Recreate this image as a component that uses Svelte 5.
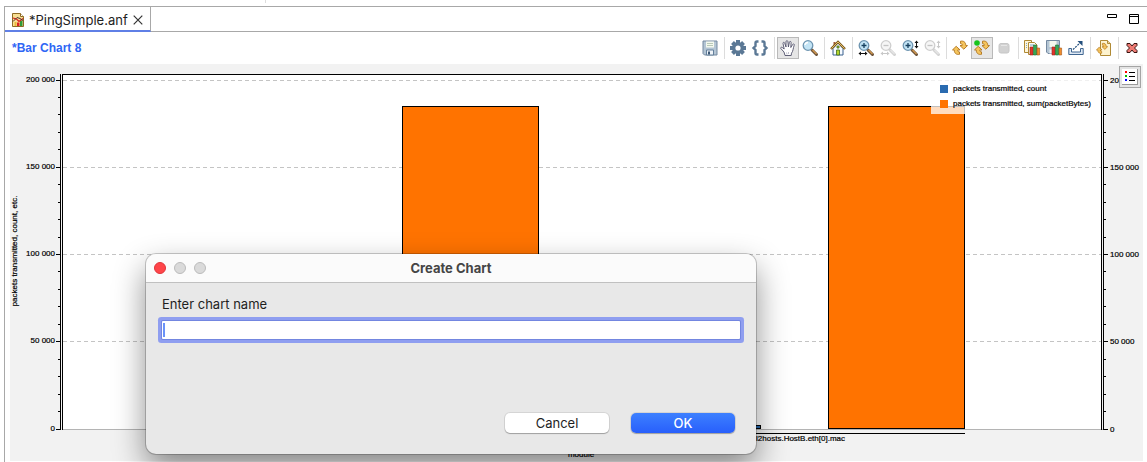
<script>
  let W = $state(1133);
  let H = $state(397);
  let name = $state('');

  const max = 200000;
  const plotLeft = 52;
  const plotTop = 10;
  let plotRight = $derived(W - 42);
  let plotBottom = $derived(H - 32);
  let plotWidth = $derived(plotRight - plotLeft);

  const y = (v) => Math.floor(plotBottom - (v / max) * (plotBottom - 16));
  const x = (f) => Math.round(plotLeft + (f / 1039) * plotWidth);

  const majors = [0, 50000, 100000, 150000, 200000];
  const minors = Array.from({ length: 20 }, (_, i) => i * 10000);
  const fmt = (v) => (v ? v / 1000 + ' 000' : '0');

  const barWidth = 137;
  const bars = [
    { at: 136, value: 2200, color: '#2a6bb0' },
    { at: 340, value: 185000, color: '#ff7300' },
    { at: 562, value: 2200, color: '#2a6bb0' },
    { at: 766, value: 185000, color: '#ff7300' }
  ];
  const groups = [
    { from: 136, to: 477 },
    { from: 562, to: 903 }
  ];

  const legend = [
    { label: 'packets transmitted, count', color: '#2a6bb0' },
    { label: 'packets transmitted, sum(packetBytes)', color: '#ff7300' }
  ];

  const tools = [
    ['save'],
    ['gear', 'braces'],
    ['hand', 'lens'],
    ['home'],
    ['hin', 'hout', 'vin', 'vout'],
    ['refresh', 'live', 'stop'],
    ['copy', 'image', 'export'],
    ['script'],
    ['close']
  ];
  const pressed = ['hand', 'live'];
  const titles = {
    save: 'Save', gear: 'Properties', braces: 'Script', hand: 'Pan', lens: 'Zoom', home: 'Home',
    hin: 'Zoom in horizontally', hout: 'Zoom out horizontally', vin: 'Zoom in vertically',
    vout: 'Zoom out vertically', refresh: 'Refresh', live: 'Live refresh', stop: 'Stop',
    copy: 'Copy chart', image: 'Save image', export: 'Export', script: 'Reload', close: 'Close'
  };
</script>

{#snippet magnifier(off, sign)}
  <path d="M10 10l4.500 4.500" stroke={off ? '#d2d2d2' : '#6b5138'} stroke-width="3" stroke-linecap="round" />
  <path d="M10.500 10l4 4" stroke={off ? '#e6e6e6' : '#d49a4e'} stroke-width="1.300" />
  <circle cx="6" cy="5.500" r="4.800" fill={off ? '#f6f6f6' : '#c3e4f5'} stroke={off ? '#cecece' : '#6d94b0'} stroke-width="1.300" />
  {#if !off && !sign}<path d="M3 5a3 3 0 0 1 3-2.500" stroke="#fff" stroke-width="1.400" />{/if}
  {#if sign}
    <path d={sign === '+' ? 'M3.500 5.500h5M6 3v5' : 'M3.500 5.500h5'} stroke={off ? '#c4c4c4' : '#17405f'} stroke-width="1.300" />
  {/if}
{/snippet}

{#snippet hArrows(c)}
  <path d="M1 13.500h8" stroke={c} />
  <path d="M3 11.500v4l-2.500-2zM7 11.500v4l2.500-2z" fill={c} />
{/snippet}

{#snippet vArrows(c)}
  <path d="M14.500 1v7" stroke={c} />
  <path d="M12.500 3h4L14.500.500zM12.500 6h4l-2 2.500z" fill={c} />
{/snippet}

{#snippet cycle()}
  <path id="" d="M8.500 1.200c3-.6 5.200.8 5.200 4.200l1.800.2-3.700 3.600L8 5.600l2.300-.2c0-1.200-.6-1.800-1.800-1.800z" fill="#f5c45c" stroke="#b0741c" stroke-width=".9" />
  <path d="M7.500 14.300c-3 .6-5.200-.8-5.200-4.200L.5 9.900l3.700-3.600L8 9.900l-2.300.2c0 1.200.6 1.800 1.800 1.800z" fill="#f5c45c" stroke="#b0741c" stroke-width=".9" />
{/snippet}

{#snippet miniBars()}
  <path d="M6 7h3v8H6z" fill="#e0342b" stroke="#9c2a1c" stroke-width=".6" />
  <path d="M9.500 5h3v10h-3z" fill="#35a853" stroke="#1d6b33" stroke-width=".6" />
  <path d="M13 8h2.600v7H13z" fill="#f08c2d" stroke="#a3561a" stroke-width=".6" />
{/snippet}

{#snippet icon(id)}
  <svg class="icon" viewBox="0 0 16 16" width="16" height="16" fill="none" aria-hidden="true">
    {#if id === 'save'}
      <path d="M1 1h14v14H2.500L1 13.500z" fill="#b4c5d4" stroke="#7489a0" />
      <path d="M4 1.500h8v6H4z" fill="#f4f8ee" />
      <path d="M5 3.500h6M5 5.500h6" stroke="#b8c9b8" />
      <path d="M4.500 10h7v5h-7z" fill="#eef3f8" stroke="#64809c" />
      <path d="M6 11.500h2v3H6z" fill="#3c5876" />
    {:else if id === 'gear'}
      <g stroke="#5b7895" stroke-width="4"><path d="M8 0v16M0 8h16M2.500 2.500l11 11M13.500 2.500l-11 11" /></g>
      <circle cx="8" cy="8" r="6" fill="#5b7895" />
      <circle cx="8" cy="8" r="2.600" fill="#fff" />
    {:else if id === 'braces'}
      <path d="M6.500 1.500H5Q3.500 1.500 3.500 3v3L1.500 8l2 2v3q0 1.500 1.500 1.500h1.500M9.500 1.500H11q1.500 0 1.500 1.500v3l2 2-2 2v3q0 1.500-1.500 1.500H9.500" stroke="#5b7895" stroke-width="2.400" />
    {:else if id === 'hand'}
      <path d="M5 15.500L4 12 .8 8.500c-.6-1 .7-1.700 1.500-1L4.200 9 3 3.500c-.2-1.400 1.300-1.600 1.700-.4L6 7 6 1.800C6 .3 7.700.3 7.900 1.600L8.400 7l1-4.800c.3-1.200 1.800-1 1.700.4L10.800 7.500l1.800-3c.6-1.100 2-.5 1.600.7-1.200 3.300-1 6-2.700 8l-.3 2.300z" fill="#fff" stroke="#50506a" stroke-width=".9" />
      <path d="M6.500 12.500l.5 2M8.500 12v2" stroke="#b4b4c4" stroke-width=".8" />
    {:else if id === 'lens'}
      {@render magnifier(false, '')}
    {:else if id === 'home'}
      <path d="M3 8.500L8 3l5 5.500V15H3z" fill="#f6faff" stroke="#39618e" />
      <path d="M3.500 2h2v4h-2z" fill="#a05a36" />
      <path d="M1 9l7-7 7 7" stroke="#7c5a1e" stroke-width="2.400" />
      <path d="M1.500 8.500L8 2l6.500 6.500" stroke="#e3bf68" stroke-width="1" />
      <path d="M7 6h2v2H7zM6.500 10h3v5h-3z" fill="#b4d62c" stroke="#406b1c" stroke-width=".8" />
    {:else if id === 'hin'}
      {@render magnifier(false, '+')}{@render hArrows('#111')}
    {:else if id === 'hout'}
      {@render magnifier(true, '-')}{@render hArrows('#c8c8c8')}
    {:else if id === 'vin'}
      {@render magnifier(false, '+')}{@render vArrows('#111')}
    {:else if id === 'vout'}
      {@render magnifier(true, '-')}{@render vArrows('#c8c8c8')}
    {:else if id === 'refresh'}
      {@render cycle()}
    {:else if id === 'live'}
      {@render cycle()}
      <circle cx="3" cy="3" r="2.800" fill="#18c41c" />
    {:else if id === 'stop'}
      <rect x="3" y="3.500" width="10" height="9.500" rx="2" fill="#d2d2d2" stroke="#c6c6c6" />
      <path d="M5 5.500h6" stroke="#e6e6e6" />
    {:else if id === 'copy'}
      <path d="M.5.500h7v12h-7z" fill="#fff6d8" stroke="#b08a35" />
      <path d="M4.500 2.500h6l2.500 2.500v9.500h-8.500z" fill="#fffdf2" stroke="#b08a35" />
      <path d="M2 3.500h1M2 5.500h1M2 7.500h1M6 5h4" stroke="#7da4c7" />
      {@render miniBars()}
    {:else if id === 'image'}
      <path d="M.5.500h13v13H2L.5 12z" fill="#b4c5d4" stroke="#7489a0" />
      <path d="M3.500 1h7v6h-7z" fill="#f4f8ee" />
      <path d="M3.500 9.500h4v4h-4z" fill="#eef3f8" />
      {@render miniBars()}
    {:else if id === 'export'}
      <path d="M.8 8.500v6h14.400v-6h-2.700V12h-9V8.500z" fill="#dfe9f4" stroke="#3f6590" />
      <path d="M5 9.500l7-6.500" stroke="#234f7d" stroke-width="1.200" stroke-dasharray="2 1" />
      <path d="M9.500 1h5v5z" fill="#234f7d" />
    {:else if id === 'script'}
      <path d="M4.500.500h7l3 3v12h-10z" fill="#fdf3cf" stroke="#b08a35" />
      <path d="M11.500.500v3h3" fill="#e8d49a" stroke="#b08a35" />
      <g transform="translate(0 2.500) scale(.75)">{@render cycle()}</g>
    {:else if id === 'close'}
      <path d="M3 3.500h3l2 2.500 2-2.500h3v2L10.500 8l2.500 2.500v2h-3L8 10l-2 2.500H3v-2L5.500 8 3 5.500z" fill="#ee7b74" stroke="#3b1411" />
    {/if}
  </svg>
{/snippet}

<div class="page">
  <div class="strip"></div>
  <section class="editor">
    <header class="tabs">
      <div class="tab">
        <svg width="12" height="14" viewBox="0 0 12 14" fill="none" aria-hidden="true">
          <path d="M.5.500h8l3 3v10H.5z" fill="#f7df94" stroke="#8f6b25" />
          <path d="M8.500.500v3h3" fill="#fff" stroke="#8f6b25" />
          <path d="M2.500 9h2v4h-2z" fill="#e8b83c" /><path d="M5 9.500h2.500V13H5z" fill="#d92020" /><path d="M8 7.500h2.500V13H8z" fill="#2f9b3b" />
          <path d="M1 5l3.500 1L7 8.500 11 5.500" stroke="#d92020" stroke-width="1.200" />
          <path d="M1 8.500L5 4.500 8 5.500l3 2" stroke="#503030" />
        </svg>
        <span>*PingSimple.anf</span>
        <button class="plain" aria-label="Close tab">
          <svg width="10" height="10" viewBox="0 0 10 10" aria-hidden="true"><path d="M.7.700l8.600 8.600M9.300.700L.7 9.300" stroke="#333" stroke-width="1.200" /></svg>
        </button>
      </div>
      <div class="window-tools">
        <button class="plain" aria-label="Minimize">
          <svg width="10" height="10" viewBox="0 0 10 10" fill="none" aria-hidden="true"><path d="M.5.500h9v3h-9z" stroke="#000" /></svg>
        </button>
        <button class="plain" aria-label="Maximize">
          <svg width="10" height="10" viewBox="0 0 10 10" fill="none" aria-hidden="true"><path d="M.5.500h9v9h-9zM.5 2.500h9" stroke="#000" /></svg>
        </button>
      </div>
    </header>

    <div class="bar">
      <h1>*Bar Chart 8</h1>
      <div class="toolbar" role="toolbar">
        {#each tools as group}
          <div class="group">
            {#each group as id}
              <button class="tool" class:pressed={pressed.includes(id)} aria-label={titles[id]}>{@render icon(id)}</button>
            {/each}
          </div>
        {/each}
      </div>
    </div>

    <div class="chart" bind:clientWidth={W} bind:clientHeight={H}>
      <svg class="plot" role="img" aria-label="Bar chart">
        <g shape-rendering="crispEdges">
          <rect x={plotLeft} y={plotTop} width={plotWidth} height={plotBottom - plotTop} fill="#fff" />
          {#each majors.slice(1) as v}
            <line x1={plotLeft + 1} x2={plotRight} y1={y(v) + 0.5} y2={y(v) + 0.5} stroke="#c4c4c4" stroke-dasharray="4 3" />
          {/each}
          <rect x={plotLeft} y={plotBottom} width={plotWidth + 2} height="1" fill="#b4b4b4" />
          {#each bars as b}
            <rect x={x(b.at) + 0.5} y={y(b.value) + 0.5} width={x(b.at + barWidth) - x(b.at) - 1} height={plotBottom - y(b.value) - 1} fill={b.color} stroke="#000" />
          {/each}
          {#each groups as g}
            <rect x={x(g.from)} y={plotBottom + 4} width={x(g.to) - x(g.from)} height="1" />
          {/each}
          <rect x={plotLeft} y={plotTop} width={plotWidth} height="1" />
          <rect x={plotLeft} y={plotTop} width="1" height={plotBottom - plotTop + 1} />
          <rect x={plotRight} y={plotTop} width="1" height={plotBottom - plotTop + 1} />
          <rect x={plotLeft - 2} y={plotTop} width="1" height={plotBottom - plotTop + 1} />
          <rect x={plotRight + 2} y={plotTop} width="1" height={plotBottom - plotTop + 1} />
          {#each minors as v}
            <rect x={plotLeft - 4} y={y(v)} width="2" height="1" />
            <rect x={plotRight + 3} y={y(v)} width="2" height="1" />
          {/each}
          {#each majors as v}
            <rect x={plotLeft - 6} y={y(v)} width="4" height="1" />
            <rect x={plotRight + 3} y={y(v)} width="4" height="1" />
          {/each}
          <rect x={plotRight - 170} y="14" width="168" height="36" fill="#fff" fill-opacity=".75" />
          {#each legend as item, i}
            <rect x={plotRight - 161} y={21 + i * 15} width="8" height="8" fill={item.color} />
          {/each}
        </g>
        {#each legend as item, i}
          <text x={plotRight - 148} y={27 + i * 15}>{item.label}</text>
        {/each}
        {#each majors as v}
          <text x={plotLeft - 7} y={y(v) + 2} text-anchor="end">{fmt(v)}</text>
          <text x={plotRight + 9} y={y(v) + 3}>{fmt(v)}</text>
        {/each}
        <text x={x(783)} y={plotBottom + 12} text-anchor="end">l2hosts.HostB.eth[0].mac</text>
        <text x={x(519)} y={plotBottom + 28} text-anchor="middle">module</text>
        <text transform="translate(7 187) rotate(-90)" text-anchor="middle">packets transmitted, count, etc.</text>
      </svg>
      <button class="legend-toggle" aria-label="Toggle legend">
        <svg width="16" height="16" viewBox="0 0 16 16" aria-hidden="true" shape-rendering="crispEdges">
          <path d="M0 0h15v15H0z" fill="#fff" /><path d="M15 0h1v16H0v-1h15z" fill="#9a9a9a" />
          <path d="M3 2h2v2H3z" fill="#f00" /><path d="M3 6h2v2H3z" fill="#00c000" /><path d="M3 10h2v2H3z" fill="#00f" />
          <path d="M7 3h6v1H7zM7 7h6v1H7zM7 11h6v1H7z" fill="#000" />
        </svg>
      </button>
    </div>
  </section>

  <form class="dialog" role="dialog" aria-labelledby="dialog-title" onsubmit={(e) => e.preventDefault()}>
    <div class="titlebar">
      <button type="button" class="light red" aria-label="Close"></button>
      <button type="button" class="light" aria-label="Minimize" disabled></button>
      <button type="button" class="light" aria-label="Zoom" disabled></button>
      <h2 id="dialog-title">Create Chart</h2>
    </div>
    <div class="body">
      <label for="chart-name">Enter chart name</label>
      <input id="chart-name" type="text" bind:value={name} />
      <div class="actions">
        <button type="button" class="push">Cancel</button>
        <button type="submit" class="push primary">OK</button>
      </div>
    </div>
  </form>
</div>

<style>
  :global(body) { margin: 0; background: #fff; }
  .page {
    position: relative;
    display: flex;
    flex-direction: column;
    height: 100vh;
    overflow: hidden;
    font: 13px/16px Inter, sans-serif;
    color: #1e1e1e;
  }
  button { font: inherit; color: inherit; margin: 0; padding: 0; border: 0; background: none; }
  svg { display: block; overflow: visible; }
  .strip {
    flex: none;
    height: 6px;
    background: linear-gradient(#ddd, #ddd) 265px 0 / 1px 3px no-repeat;
  }
  .editor {
    flex: 1;
    min-height: 0;
    display: flex;
    flex-direction: column;
    margin-left: 4px;
    border-left: 1px solid #a8a8a8;
    border-top: 1px solid #a8a8a8;
  }
  .tabs {
    display: flex;
    justify-content: space-between;
    height: 25px;
    background: linear-gradient(#a8a8a8, #a8a8a8) 0 100% / 100% 1px no-repeat;
  }
  .tab {
    display: flex;
    align-items: center;
    box-sizing: border-box;
    gap: 5px;
    padding: 2px 7px 0 7px;
    border-right: 1px solid #a8a8a8;
    border-bottom: 2px solid #5f7fe6;
    background: #fff;
  }
  .tab span { white-space: nowrap; }
  .window-tools { display: flex; gap: 12px; padding: 7px 8px 0 0; align-items: flex-start; }
  .bar {
    display: flex;
    align-items: center;
    justify-content: space-between;
    height: 32px;
    padding: 0 4px 0 7px;
  }
  h1 {
    margin: 0;
    font: bold 12px/16px "Liberation Sans", Arial, sans-serif;
    color: #2f66f5;
    white-space: nowrap;
  }
  .toolbar, .group { display: flex; }
  .group + .group { padding-left: 6px; background: linear-gradient(#dcdcdc, #dcdcdc) 3px 0 / 1px 100% no-repeat; }
  .tool { box-sizing: border-box; width: 22px; height: 22px; padding: 2px; border: 1px solid transparent; }
  .pressed { border-color: #b9b9b9; background: #e6e6e6; }
  .icon { width: 16px; height: 16px; }
  .chart {
    position: relative;
    flex: 1;
    min-height: 0;
    margin: 0 4px 1px 5px;
    background: #f2f2f2;
  }
  .plot { position: absolute; inset: 0; width: 100%; height: 100%; overflow: hidden; }
  .plot text { font: 8px "Liberation Sans", Arial, sans-serif; fill: #000; stroke: #000; stroke-width: 0.2px; }
  .legend-toggle {
    position: absolute;
    top: 2px;
    right: 2px;
    padding: 2px;
    border: 1px solid #a5a5a5;
    background: #e4e4e4;
  }
  .dialog {
    position: absolute;
    top: 254px;
    left: 146px;
    right: 391px;
    border-radius: 10px;
    background: #e8e8e8;
    box-shadow: 0 0 0 1px rgba(0, 0, 0, 0.2), 0 14px 32px rgba(0, 0, 0, 0.45);
  }
  .titlebar {
    position: relative;
    display: flex;
    align-items: center;
    gap: 8px;
    height: 28px;
    padding: 0 8px;
    border-bottom: 1px solid #c0c0c0;
    border-radius: 10px 10px 0 0;
    background: #fbfbfb;
  }
  .light {
    box-sizing: border-box;
    width: 12px;
    height: 12px;
    border: 1px solid #bcbcbc;
    border-radius: 50%;
    background: #dadada;
  }
  .light.red { border-color: #e0343a; background: #ff4549; }
  h2 {
    flex: 1;
    margin: 0 60px 0 0;
    font: 700 13px/16px Inter, sans-serif;
    color: #454545;
    text-align: center;
  }
  .body { display: flex; flex-direction: column; padding: 13px 16px 21px; }
  input {
    box-sizing: border-box;
    height: 18px;
    margin: 9px 0 74px;
    padding: 0 4px;
    border: 0;
    border-radius: 1px;
    outline: 0;
    font: inherit;
    caret-color: transparent;
    background: linear-gradient(#6a92f8, #6a92f8) 1px 2px / 2px 14px no-repeat #fff;
    box-shadow: 0 0 0 1px #7386e0, 0 0 0 4px #8f9ef0;
  }
  .actions { display: flex; justify-content: flex-end; gap: 22px; padding-right: 5px; }
  .push {
    width: 104px;
    height: 20px;
    border-radius: 5px;
    background: #fff;
    box-shadow: 0 0 0 1px rgba(0, 0, 0, 0.08), 0 1px 1px rgba(0, 0, 0, 0.25);
    line-height: 20px;
  }
  .primary { background: linear-gradient(#3d80ff, #285ffb); color: #fff; font-weight: 500; }
</style>
